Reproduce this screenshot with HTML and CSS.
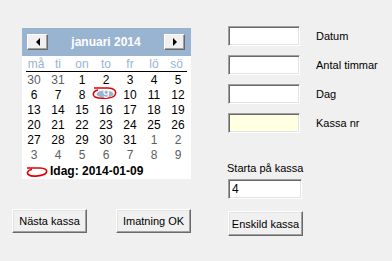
FILE: index.html
```html
<!DOCTYPE html>
<html lang="sv">
<head>
    <meta charset="UTF-8">
    <title>Kassa</title>
    <link rel="stylesheet" href="styles.css">
</head>
<body>
    <div class="window">
        <div class="left">
            <div class="calendar">
                <div class="cal-head">
                    <button class="cal-btn"><span class="arrow-left"></span></button>
                    <span class="cal-title">januari 2014</span>
                    <button class="cal-btn"><span class="arrow-right"></span></button>
                </div>
                <div class="cal-names">
                    <span>må</span><span>ti</span><span>on</span><span>to</span><span>fr</span><span>lö</span><span>sö</span>
                </div>
                <div class="cal-days">
                    <span class="other">30</span><span class="other">31</span><span>1</span><span>2</span><span>3</span><span>4</span><span>5</span>
                    <span>6</span><span>7</span><span>8</span>
                    <span class="today">
                        <svg class="today-mark" width="26" height="16" viewBox="0 0 26 16">
                            <ellipse cx="13" cy="9" rx="8.5" ry="3.6" fill="#99b4d1"/>
                            <path d="M2 3 H16 C22 3 25 6 23 10 C21 14 7 14 3 12 C0 10 1 6 6 5" fill="none" stroke="#e00000" stroke-width="1.5"/>
                        </svg>
                        <span class="today-num">9</span>
                    </span>
                    <span>10</span><span>11</span><span>12</span>
                    <span>13</span><span>14</span><span>15</span><span>16</span><span>17</span><span>18</span><span>19</span>
                    <span>20</span><span>21</span><span>22</span><span>23</span><span>24</span><span>25</span><span>26</span>
                    <span>27</span><span>28</span><span>29</span><span>30</span><span>31</span><span class="other">1</span><span class="other">2</span>
                    <span class="other">3</span><span class="other">4</span><span class="other">5</span><span class="other">6</span><span class="other">7</span><span class="other">8</span><span class="other">9</span>
                </div>
                <div class="cal-today">
                    <svg width="22" height="12" viewBox="0 0 22 12">
                        <path d="M1 2 H14 C19 2 22 4 20 7 C18 10 6 11 3 9 C0 7 2 4 6 3.5" fill="none" stroke="#e00000" stroke-width="1.6"/>
                    </svg>
                    <span>Idag: 2014-01-09</span>
                </div>
            </div>
            <div class="actions">
                <button class="btn">Nästa kassa</button>
                <button class="btn">Imatning OK</button>
            </div>
        </div>
        <div class="right">
            <div class="fields">
                <input type="text" class="field">
                <label>Datum</label>
                <input type="text" class="field">
                <label>Antal timmar</label>
                <input type="text" class="field">
                <label>Dag</label>
                <input type="text" class="field yellow">
                <label>Kassa nr</label>
            </div>
            <div class="start-label">Starta på kassa</div>
            <input type="text" class="field" value="4">
            <button class="btn single">Enskild kassa</button>
        </div>
    </div>
</body>
</html>
```

FILE: styles.css
```css
body {
    margin: 0;
    background: #f0f0f0;
    font-family: 'Liberation Sans', Arial, sans-serif;
    font-size: 11px;
    color: #000;
}
.window {
    display: flex;
    width: 392px;
    height: 261px;
}
.left {
    width: 191px;
    padding-left: 12px;
    box-sizing: border-box;
}
.calendar {
    margin-left: 10px;
    margin-top: 28px;
    width: 169px;
    background: #fff;
}
.cal-head {
    height: 28px;
    background: #99b4d1;
    display: flex;
    align-items: center;
    justify-content: space-between;
    padding: 0 6px 0 5px;
}
.cal-title {
    color: #fff;
    font-weight: bold;
    font-size: 12px;
}
.cal-btn {
    width: 21px;
    height: 16px;
    padding: 0;
    background: #f0f0f0;
    border: 1px solid;
    border-color: #fff #696969 #696969 #fff;
    box-shadow: inset -1px -1px 0 #a0a0a0;
    display: flex;
    align-items: center;
    justify-content: center;
    box-sizing: border-box;
}
.arrow-left {
    border-top: 4px solid transparent;
    border-bottom: 4px solid transparent;
    border-right: 4px solid #000;
}
.arrow-right {
    border-top: 4px solid transparent;
    border-bottom: 4px solid transparent;
    border-left: 4px solid #000;
}
.cal-names {
    display: grid;
    grid-template-columns: 20px 24px 24px 24px 24px 24px 21px;
    height: 15px;
    align-items: center;
    margin: 0 4px;
    border-bottom: 1px solid #000;
    color: #99b4d1;
    font-size: 12px;
}
.cal-names span, .cal-days span {
    text-align: center;
}
.cal-days {
    display: grid;
    grid-template-columns: repeat(7, 24px);
    grid-auto-rows: 15px;
    align-items: center;
    font-size: 12px;
}
.cal-days .other {
    color: #5a6066;
}
.cal-days .today {
    position: relative;
    height: 15px;
    line-height: 15px;
}
.today-mark {
    position: absolute;
    left: -2px;
    top: -2px;
}
.today-num {
    position: relative;
    color: #fff;
}
.cal-today {
    height: 17px;
    display: flex;
    align-items: center;
    gap: 2px;
    padding-left: 4px;
    font-weight: bold;
    font-size: 12px;
}
.cal-today svg {
    margin-top: 2px;
}
.actions {
    display: flex;
    gap: 29px;
    margin-top: 30px;
}
.btn {
    width: 75px;
    height: 24px;
    padding: 0;
    background: #f0f0f0;
    font-family: 'Liberation Sans', Arial, sans-serif;
    font-size: 11px;
    color: #000;
    border: 1px solid;
    border-color: #fff #696969 #696969 #fff;
    box-shadow: inset -1px -1px 0 #a0a0a0, inset 1px 1px 0 #e3e3e3;
    box-sizing: border-box;
}
.right {
    padding-left: 37px;
    padding-top: 26px;
}
.fields {
    display: grid;
    grid-template-columns: 72px auto;
    grid-auto-rows: 20px;
    column-gap: 16px;
    row-gap: 9px;
    align-items: center;
}
.field {
    display: block;
    width: 72px;
    height: 20px;
    margin: 0;
    padding: 0 3px;
    background: #fff;
    font-family: 'Liberation Sans', Arial, sans-serif;
    font-size: 12px;
    border: 1px solid;
    border-color: #a0a0a0 #fff #fff #a0a0a0;
    box-shadow: inset 1px 1px 0 #696969, inset -1px -1px 0 #e3e3e3;
    box-sizing: border-box;
    outline: none;
}
.field.yellow {
    background: #ffffe1;
}
.start-label {
    margin-top: 29px;
    margin-left: -1px;
    font-size: 11px;
    line-height: 13px;
}
.right > .field {
    width: 74px;
    margin-top: 4px;
}
.btn.single {
    height: 25px;
    margin-top: 12px;
}
```
